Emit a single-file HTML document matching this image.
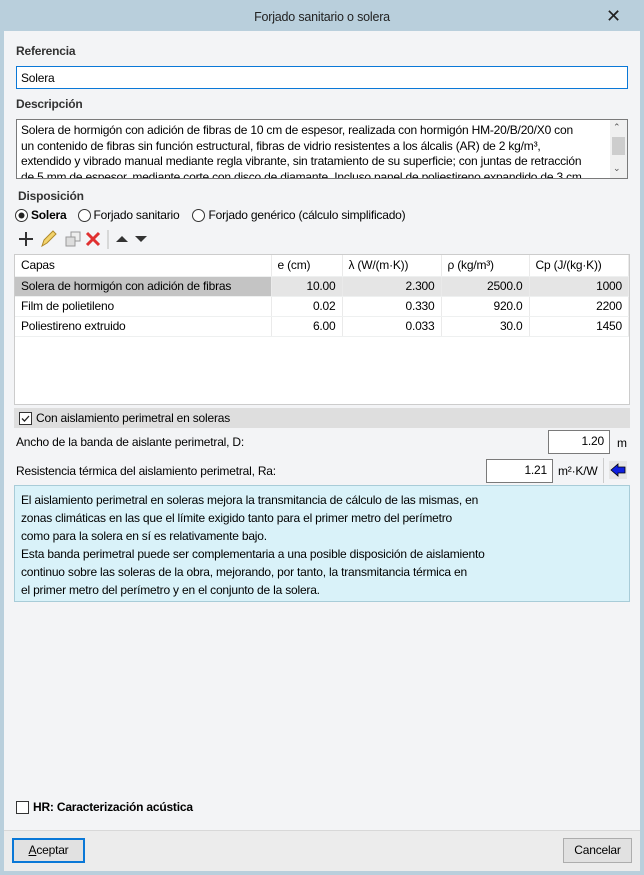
<!DOCTYPE html>
<html><head><meta charset="utf-8"><style>
*{box-sizing:border-box;margin:0;padding:0}
body{width:644px;height:875px;background:#b9cfdc;font-family:"Liberation Sans",sans-serif;font-size:12px;color:#000;position:relative;overflow:hidden;letter-spacing:-0.2px}
.a{position:absolute;white-space:nowrap}
#title{left:0;top:0;width:644px;height:31px;text-align:center;line-height:35px;font-size:12.5px;color:#222}
#body{left:4px;top:31px;width:636px;height:840px;background:#f3f4f6}
#foot{left:4px;top:830px;width:636px;height:41px;background:#ececec;border-top:1px solid #d8d8d8}
.b{font-weight:bold;color:#333}
.inp{background:#fff;border:1px solid #7a7a7a}
table{border-collapse:collapse;font-size:12px}
td{height:20px;padding:0 6px;border-right:1px solid #eaeaea;border-bottom:1px solid #eef0f0}
.r{text-align:right}
.btn{background:#e1e1e1;border:1px solid #adadad;text-align:center;line-height:22px}
</style></head><body>
<div class="a" id="title">Forjado sanitario o solera</div>
<div class="a" style="left:606px;top:6px;font-size:18px;color:#222">✕</div>
<div class="a" id="body"></div>
<div class="a b" style="left:16px;top:44px">Referencia</div>
<div class="a inp" style="left:16px;top:66px;width:612px;height:23px;border-color:#0a78d7;padding:4px 4px">Solera</div>
<div class="a b" style="left:16px;top:97px">Descripción</div>
<div class="a inp" style="left:16px;top:119px;width:612px;height:60px;overflow:hidden;padding:3px 4px;line-height:15.5px;font-size:12px">
Solera de hormigón con adición de fibras de 10 cm de espesor, realizada con hormigón HM-20/B/20/X0 con<br>un contenido de fibras sin función estructural, fibras de vidrio resistentes a los álcalis (AR) de 2 kg/m³,<br>extendido y vibrado manual mediante regla vibrante, sin tratamiento de su superficie; con juntas de retracción<br>de 5 mm de espesor, mediante corte con disco de diamante. Incluso panel de poliestireno expandido de 3 cm</div>
<div class="a" style="left:610px;top:120px;width:17px;height:58px;background:#f0f0f0"></div>
<div class="a" style="left:612px;top:137px;width:13px;height:18px;background:#cdcdcd"></div>
<div class="a" style="left:613px;top:122px;font-size:9px;color:#555">⌃</div>
<div class="a" style="left:613px;top:163px;font-size:9px;color:#555">⌄</div>
<div class="a b" style="left:18px;top:189px">Disposición</div>
<div class="a" style="left:15px;top:208px;display:flex;align-items:center;gap:3px">
<svg width="13" height="13"><circle cx="6.5" cy="6.5" r="6" fill="#fff" stroke="#333"/><circle cx="6.5" cy="6.5" r="3" fill="#222"/></svg><b>Solera</b>
<svg width="13" height="13" style="margin-left:8px"><circle cx="6.5" cy="6.5" r="6" fill="#fff" stroke="#333"/></svg>Forjado sanitario
<svg width="13" height="13" style="margin-left:10px"><circle cx="6.5" cy="6.5" r="6" fill="#fff" stroke="#333"/></svg>Forjado genérico (cálculo simplificado)</div>
<svg class="a" style="left:14px;top:229px" width="150" height="20">
<path d="M6 3v14M-1 10h14" transform="translate(6,0)" stroke="#333" stroke-width="2"/>
<path d="M28 17l2-6 9-9 3 3-9 9z" fill="#f3d36b" stroke="#b08a2a"/>
<rect x="57" y="3" width="9" height="9" fill="#eee" stroke="#999"/><rect x="52" y="8" width="9" height="9" fill="#ddd" stroke="#999"/>
<path d="M73 4l12 12M85 4l-12 12" stroke="#e03030" stroke-width="3"/>
<path d="M94 1v19" stroke="#bbb"/>
<path d="M102 13l6-6 6 6z" fill="#333"/><path d="M121 7h12l-6 6z" fill="#333"/>
</svg>
<div class="a" style="left:14px;top:254px;width:616px;height:151px;background:#fff;border:1px solid #ccc">
<table style="width:614px"><tr style="background:#fff"><td style="width:256px;height:21px">Capas</td><td style="width:71px">e (cm)</td><td style="width:99px">λ (W/(m·K))</td><td style="width:88px">ρ (kg/m³)</td><td>Cp (J/(kg·K))</td></tr>
<tr style="background:#e5e5e5"><td style="background:#c4c4c4">Solera de hormigón con adición de fibras</td><td class="r">10.00</td><td class="r">2.300</td><td class="r">2500.0</td><td class="r">1000</td></tr>
<tr><td>Film de polietileno</td><td class="r">0.02</td><td class="r">0.330</td><td class="r">920.0</td><td class="r">2200</td></tr>
<tr><td>Poliestireno extruido</td><td class="r">6.00</td><td class="r">0.033</td><td class="r">30.0</td><td class="r">1450</td></tr></table></div>
<div class="a" style="left:14px;top:408px;width:616px;height:20px;background:#dedede"></div>
<div class="a" style="left:19px;top:411px;display:flex;align-items:center;gap:4px"><svg width="13" height="13"><rect x=".5" y=".5" width="12" height="12" fill="#fff" stroke="#333"/><path d="M3 6.5l2.5 2.5 4.5-5" fill="none" stroke="#222" stroke-width="1.3"/></svg>Con aislamiento perimetral en soleras</div>
<div class="a" style="left:16px;top:435px">Ancho de la banda de aislante perimetral, D:</div>
<div class="a inp" style="left:548px;top:430px;width:62px;height:24px;text-align:right;padding:3px 5px">1.20</div>
<div class="a" style="left:617px;top:436px">m</div>
<div class="a" style="left:16px;top:464px">Resistencia térmica del aislamiento perimetral, Ra:</div>
<div class="a inp" style="left:486px;top:459px;width:67px;height:24px;text-align:right;padding:3px 5px">1.21</div>
<div class="a" style="left:558px;top:464px">m²·K/W</div>
<div class="a" style="left:603px;top:458px;width:1px;height:25px;background:#ccc"></div>
<svg class="a" style="left:609px;top:461px" width="18" height="18"><rect width="18" height="18" fill="#e6e6e6"/><path d="M2 9l7-6v3h7v6H9v3z" fill="#1020e0" stroke="#000" stroke-width=".8"/></svg>
<div class="a" style="left:14px;top:485px;width:616px;height:117px;background:#d9f2f9;border:1px solid #a8ccd8;padding:5px 6px;line-height:18px;font-size:12px">El aislamiento perimetral en soleras mejora la transmitancia de cálculo de las mismas, en<br>zonas climáticas en las que el límite exigido tanto para el primer metro del perímetro<br>como para la solera en sí es relativamente bajo.<br>Esta banda perimetral puede ser complementaria a una posible disposición de aislamiento<br>continuo sobre las soleras de la obra, mejorando, por tanto, la transmitancia térmica en<br>el primer metro del perímetro y en el conjunto de la solera.</div>
<div class="a" style="left:16px;top:800px;display:flex;align-items:center;gap:4px"><svg width="13" height="13"><rect x=".5" y=".5" width="12" height="12" fill="#fff" stroke="#333"/></svg><b>HR: Caracterización acústica</b></div>
<div class="a" id="foot"></div>
<div class="a btn" style="left:12px;top:838px;width:73px;height:25px;border:2px solid #0a78d7;line-height:21px"><u>A</u>ceptar</div>
<div class="a btn" style="left:563px;top:838px;width:69px;height:25px">Cancelar</div>
</body></html>
